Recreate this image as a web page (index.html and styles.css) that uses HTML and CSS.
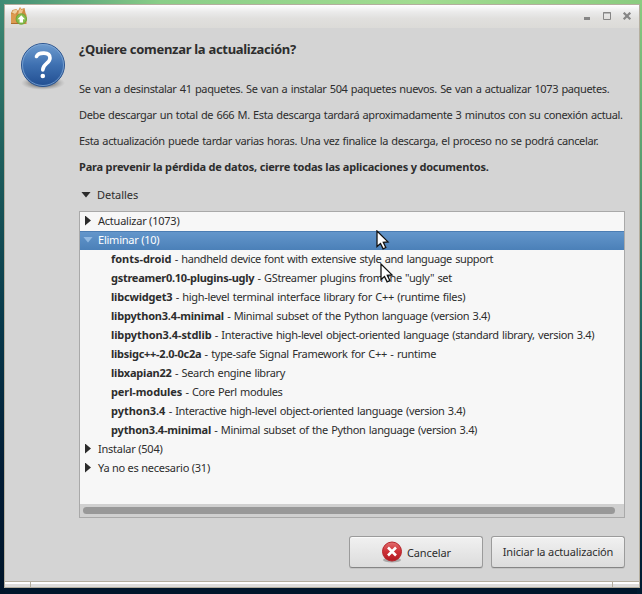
FILE: index.html
```html
<!DOCTYPE html>
<html lang="es">
<head>
<meta charset="utf-8">
<title>Actualización</title>
<link rel="stylesheet" href="styles.css">
</head>
<body>
<div class="window">
  <header class="titlebar">
    <svg class="app-icon" width="18" height="18" viewBox="0 0 18 18">
      <path d="M1 6l1.500-3 4-1 1.500 2 2-4 1.500 2 3-1 1 5 1 2v9H1z" fill="#cf8b42"/>
      <path d="M2 5.500l1-2 4-1 0 2.500-2 2z" fill="#f0d0a0"/>
      <path d="M8.500 5l1.800-4 1.200 2 2-1-2 5-3 1z" fill="#efc58d"/>
      <path d="M1 7h5v10H1z" fill="#dc9a50"/>
      <path d="M1 16.500h8" stroke="#ad6d2b"/>
      <circle cx="11.300" cy="12" r="5.200" fill="#86bd4c" stroke="#6fa63b"/>
      <path d="M11.300 8.200l3.700 4h-2v3.300H9.600v-3.300h-2z" fill="#fff"/>
    </svg>
    <svg class="controls" width="50" height="12" viewBox="0 0 50 12">
      <path d="M0 5h6v3H0z" fill="#868686"/>
      <path d="M19.500 .5h7v7h-7z M19 1h8" fill="none" stroke="#868686"/>
      <path d="M39.700 .7l6.600 6.600M46.300 .7l-6.600 6.600" stroke="#868686" stroke-width="2.200"/>
    </svg>
  </header>
  <main class="content">
    <svg class="question" width="46" height="50" viewBox="0 0 46 50">
      <defs>
        <linearGradient id="blue" x2="0" y2="1"><stop stop-color="#6e9ccf"/><stop offset=".5" stop-color="#3e70b1"/><stop offset="1" stop-color="#214e91"/></linearGradient>
        <radialGradient id="shade"><stop offset=".55" stop-color="#777" stop-opacity=".7"/><stop offset="1" stop-color="#999" stop-opacity="0"/></radialGradient>
      </defs>
      <ellipse cx="23" cy="41" rx="22" ry="7" fill="url(#shade)"/>
      <circle cx="23" cy="23" r="21.500" fill="url(#blue)" stroke="#2c5590"/>
      <circle cx="23" cy="23" r="20.500" fill="none" stroke="#86acd8" stroke-opacity=".75"/>
      <path d="M16.500 14.500c2-4.500 13.500-5 13.500 1.500 0 5.500-7.200 5.500-7.200 12" fill="none" stroke="#fff" stroke-width="3.600" stroke-linecap="round"/>
      <circle cx="22.800" cy="34" r="2.300" fill="#fff"/>
    </svg>
    <div class="body">
      <h1>¿Quiere comenzar la actualización?</h1>
      <p>Se van a desinstalar 41 paquetes. Se van a instalar 504 paquetes nuevos. Se van a actualizar 1073 paquetes.</p>
      <p>Debe descargar un total de 666 M. Esta descarga tardará aproximadamente 3 minutos con su conexión actual.</p>
      <p>Esta actualización puede tardar varias horas. Una vez finalice la descarga, el proceso no se podrá cancelar.</p>
      <p><b>Para prevenir la pérdida de datos, cierre todas las aplicaciones y documentos.</b></p>
      <div class="expander"><i class="down"></i>Detalles</div>
      <div class="tree">
        <div class="row group"><i class="right"></i>Actualizar (1073)</div>
        <div class="row group selected"><i class="down"></i>Eliminar (10)</div>
        <div class="row"><b class="wide">fonts-droid</b><span class="tight">&nbsp;- handheld device font with extensive style and language support</span></div>
        <div class="row"><b class="narrow">gstreamer0.10-plugins-ugly</b><span>&nbsp;- GStreamer plugins from the "ugly" set</span></div>
        <div class="row"><b>libcwidget3</b><span class="loose">&nbsp;- high-level terminal interface library for C++ (runtime files)</span></div>
        <div class="row"><b>libpython3.4-minimal</b><span>&nbsp;- Minimal subset of the Python language (version 3.4)</span></div>
        <div class="row"><b class="mid">libpython3.4-stdlib</b><span>&nbsp;- Interactive high-level object-oriented language (standard library, version 3.4)</span></div>
        <div class="row"><b class="narrow">libsigc++-2.0-0c2a</b><span class="loose">&nbsp;- type-safe Signal Framework for C++ - runtime</span></div>
        <div class="row"><b>libxapian22</b><span>&nbsp;- Search engine library</span></div>
        <div class="row"><b class="mid">perl-modules</b><span>&nbsp;- Core Perl modules</span></div>
        <div class="row"><b class="wide">python3.4</b><span>&nbsp;- Interactive high-level object-oriented language (version 3.4)</span></div>
        <div class="row"><b>python3.4-minimal</b><span>&nbsp;- Minimal subset of the Python language (version 3.4)</span></div>
        <div class="row group"><i class="right"></i>Instalar (504)</div>
        <div class="row group"><i class="right"></i>Ya no es necesario (31)</div>
        <div class="scroll"><div class="thumb"></div></div>
      </div>
      <div class="actions">
        <button class="cancel">
          <svg width="22" height="22" viewBox="0 0 22 22">
            <defs><linearGradient id="red" x2="0" y2="1"><stop stop-color="#e26f70"/><stop offset=".5" stop-color="#cd3036"/><stop offset="1" stop-color="#b31821"/></linearGradient></defs>
            <ellipse cx="11" cy="19" rx="9" ry="2.500" fill="#aaa"/>
            <circle cx="11" cy="10.500" r="9.500" fill="url(#red)" stroke="#b5252b"/>
            <path d="M7 6.500l8 8M15 6.500l-8 8" stroke="#fff" stroke-width="2.600"/>
          </svg>
          <span>Cancelar</span>
        </button>
        <button class="start"><span>Iniciar la actualización</span></button>
      </div>
    </div>
  </main>
  <footer class="grip"><i></i><i></i><i></i></footer>
</div>
<svg class="cursor one" width="14" height="20" viewBox="0 0 14 20"><path d="M1 1v15.500l3.500-3 2.600 5.300 2.700-1.300-2.500-5.200 4.700-.4z" fill="#fff" stroke="#111" stroke-width="1.300"/></svg>
<svg class="cursor two" width="14" height="20" viewBox="0 0 14 20"><path d="M1 1v15.500l3.500-3 2.600 5.300 2.700-1.300-2.500-5.200 4.700-.4z" fill="#fff" stroke="#111" stroke-width="1.300"/></svg>
</body>
</html>
```
FILE: styles.css
```css
* { box-sizing: border-box; }
body {
  margin: 0;
  width: 642px;
  height: 594px;
  padding: 4px 2px 6px 4px;
  overflow: hidden;
  font: 11px/19px "Noto Sans", "Open Sans", sans-serif;
  letter-spacing: -0.235px;
  color: #2d2d2d;
  background:
    linear-gradient(90deg, #3f8b74, #8ace88 25%, #a2dc91 65%, #8bcc80) 0 0 / 100% 4px no-repeat,
    linear-gradient(#3f8b74, #1f605d 25%, #07384a 55%, #021c35 80%, #001529) 0 0 / 5px 100% no-repeat,
    linear-gradient(#8bcc80, #54996e 30%, #2a7064 50%, #06344a 75%, #001a30) 100% 0 / 5px 100% no-repeat,
    #00162b;
}
p { letter-spacing: -0.355px; word-spacing: 0.75px; }
b { letter-spacing: -0.19px; word-spacing: 0; }
.wide { letter-spacing: -0.03px; }
.mid { letter-spacing: -0.1px; }
.narrow { letter-spacing: -0.27px; }
.row span { letter-spacing: -0.35px; word-spacing: 0.8px; }
.row .tight { letter-spacing: -0.39px; }
.row .loose { letter-spacing: -0.31px; }
.window {
  height: 584px;
  display: flex;
  flex-direction: column;
  background: #d4d4d4;
  border: 1px solid #b4ae9e;
}
.titlebar {
  height: 23px;
  flex: none;
  display: flex;
  justify-content: space-between;
  align-items: flex-start;
  padding: 2px 5px 0 5px;
  background: linear-gradient(#fff, #ebebeb 30%, #e0dfdd 60%, #dcdbd8);
}
.controls { margin: 5px 0 0; }
.content { flex: 1; display: flex; padding: 14px 14px 0 15px; min-height: 0; }
.question { flex: none; margin-right: 13px; }
.body { flex: 1; min-width: 0; white-space: nowrap; }
h1 { margin: -2px 0 20px; font-size: 13px; line-height: 19px; letter-spacing: -0.3px; }
p { margin: 0 0 7px; }
.expander { display: flex; align-items: center; margin-top: 9px; letter-spacing: -0.05px; }
.expander i { margin: 0 6px 0 2px; }
.down, .right { display: block; flex: none; background: #2b2b2b; }
.down { width: 10px; height: 6px; clip-path: polygon(0 0, 100% 0, 50% 100%); }
.right { width: 6px; height: 10px; clip-path: polygon(0 0, 100% 50%, 0 100%); }
.tree {
  width: 546px;
  height: 307px;
  margin-top: 7px;
  display: flex;
  flex-direction: column;
  border: 1px solid #a9a9a9;
  background: #f7f7f7;
}
.row { display: flex; align-items: center; height: 19px; padding: 0 0 2px 31px; }
.group { padding-left: 5px; }
.group .right { margin-right: 7px; }
.group .down { margin: 0 5px 0 -2px; }
.selected {
  color: #fff;
  background: linear-gradient(#4b7db3 1px, #6396cb 1px, #4b80b8);
}
.selected .down { background: #91b9e2; }
.scroll { margin-top: auto; height: 13px; padding: 3px 9px 3px 3px; background: #d0d0d0; }
.thumb { height: 7px; border-radius: 4px; background: #989898; }
.actions { display: flex; gap: 8px; margin: 18px 0 0 270px; }
button {
  width: 134px;
  height: 32px;
  display: flex;
  justify-content: center;
  align-items: center;
  padding: 0;
  font: inherit;
  color: inherit;
  border: 1px solid #9b9b9b;
  border-bottom-color: #858585;
  border-radius: 3px;
  background: linear-gradient(#f1f1f1, #dcdcdc);
  box-shadow: inset 0 1px #fafafa, 0 1px #c4c4c4;
}
.cancel { letter-spacing: -0.1px; }
.start { letter-spacing: -0.14px; padding-bottom: 2px; }
.cancel svg { margin-right: 4px; }
.grip {
  height: 6px;
  flex: none;
  display: grid;
  grid-template-columns: 25px 1fr 26px;
  gap: 1px;
  background: #b4ae9e;
  border-top: 1px solid #b4ae9e;
}
.grip i { background: linear-gradient(#fff 30%, #dedddb 50%); }
.cursor { position: absolute; }
.one { left: 376px; top: 230px; }
.two { left: 380px; top: 263px; }
```
